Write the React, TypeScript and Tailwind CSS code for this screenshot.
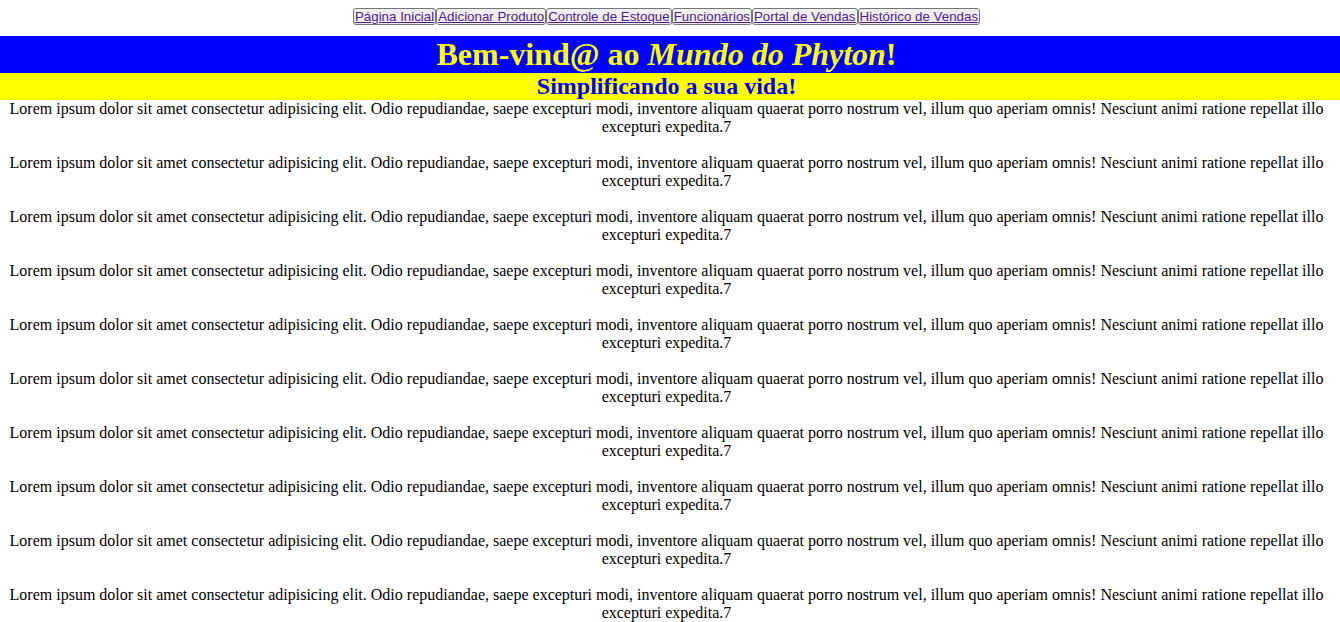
const links = [
  'Página Inicial',
  'Adicionar Produto',
  'Controle de Estoque',
  'Funcionários',
  'Portal de Vendas',
  'Histórico de Vendas',
]

const lorem =
  'Lorem ipsum dolor sit amet consectetur adipisicing elit. Odio repudiandae, saepe excepturi modi, inventore aliquam quaerat porro nostrum vel, illum quo aperiam omnis! Nesciunt animi ratione repellat illo excepturi expedita.7'

export default function App() {
  return (
    <div className="min-h-screen bg-white font-['Liberation_Serif','Times_New_Roman',serif] text-black">
      <nav className="flex h-9 items-start justify-center pt-2 pr-[7px]">
        {links.map((l) => (
          <button
            key={l}
            className="rounded-[3px] border border-[#767676] bg-[#efefef] px-px py-0 font-['Liberation_Sans',Arial,sans-serif] text-[13.33px] leading-[15px]"
          >
            <a href="#" className="text-[#551a8b] underline">
              {l}
            </a>
          </button>
        ))}
      </nav>

      <h1 className="bg-[#0000ff] pr-[7px] text-center text-[32px] font-bold leading-[37px] text-[#ffff00]">
        Bem-vind@ ao <i>Mundo do Phyton</i>!
      </h1>
      <h2 className="bg-[#ffff00] pr-[7px] text-center text-[24px] font-bold leading-[27px] text-[#0000ff]">
        Simplificando a sua vida!
      </h2>

      <main className="pr-[7px] text-center text-[16px] leading-[18px]">
        {Array.from({ length: 10 }).map((_, i) => (
          <p key={i} className="mb-[18px]">
            {lorem}
          </p>
        ))}
      </main>
    </div>
  )
}
